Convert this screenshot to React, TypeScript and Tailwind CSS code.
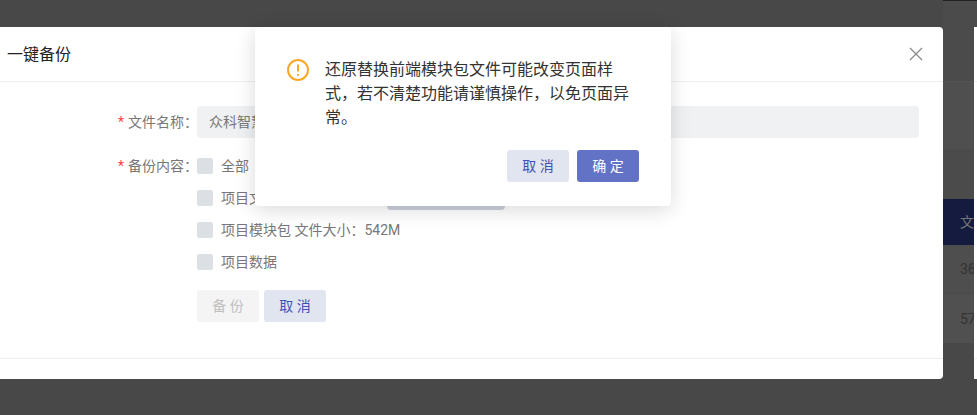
// App.tsx - backup dialog with confirm popup on top
const font = "font-['Roboto','Noto_Sans_CJK_SC',sans-serif]";

function Check({ label }: { label: string }) {
  return (
    <label className="flex h-8 items-center text-sm text-[#777]">
      <span className="mr-2 h-4 w-4 rounded-[2px] bg-[#dce0e5]" />
      {label}
    </label>
  );
}

export default function App() {
  return (
    <div className={`relative h-[415px] w-[977px] overflow-hidden bg-[#484848] ${font}`}>
      {/* page behind the mask */}
      <div className="ml-auto flex h-full w-[34px] flex-col border-t border-[#222] text-sm text-[#333]">
        <div className="h-[81px] border-b border-[#555] bg-[#4b4b4b]" />
        <div className="h-[67px] bg-[#4f4f4f]" />
        <div className="h-[50px] bg-[#4b4b4b]" />
        <div className="flex h-[46px] items-center bg-[#141b3f] pl-[17px] text-[#777]">文</div>
        <div className="flex h-[49px] items-center border-b border-[#4a4a4a] bg-[#4e4e4e] pl-[17px]">36</div>
        <div className="flex h-[49px] items-center bg-[#505050] pl-[17px]">57</div>
      </div>

      {/* edge of another white panel at the far right */}
      <div className="absolute right-0 top-[27px] flex h-[352px] w-[3px] flex-col bg-white">
        <div className="h-[55px] border-b border-[#eee]" />
        <div className="h-[277px] border-b border-[#eee]" />
      </div>

      {/* backup dialog */}
      <div className="absolute left-[-10px] top-[27px] flex h-[352px] w-[953px] flex-col rounded-[4px] bg-white">
        <div className="flex h-[55px] items-center justify-between border-b border-[#eee] pl-[17px] pr-[19px]">
          <span className="pt-px text-base text-[#222]">一键备份</span>
          <svg width="16" height="16" viewBox="0 0 16 16" fill="none" stroke="#8a8a8a" strokeWidth="1.3">
            <path d="M2 2l12 12M14 2L2 14" />
          </svg>
        </div>
        <div className="flex-1 border-b border-[#eee] pr-[24px] pt-6">
          <div className="flex items-center">
            <div className="w-[208px] text-right text-sm text-[#777]">
              <span className="mr-1 text-[#f44]">*</span>
              {"文件名称\uFF1A"}
            </div>
            <div className="-ml-px flex h-8 flex-1 items-center rounded-[4px] bg-[#f0f1f3] px-3 text-sm text-[#777]">
              众科智慧园区项目
            </div>
          </div>
          <div className="mt-[12px] flex">
            <div className="flex h-8 w-[208px] items-center justify-end text-sm text-[#777]">
              <span className="mr-1 text-[#f44]">*</span>
              {"备份内容\uFF1A"}
            </div>
            <div className="-ml-px">
              <Check label="全部" />
              <div className="relative">
                <Check label={"项目文件 文件大小\uFF1A36M"} />
                <div className="absolute left-[190px] top-0 h-7 w-[118px] rounded-[4px] bg-[#cdd1dc]" />
              </div>
              <Check label={"项目模块包 文件大小\uFF1A542M"} />
              <Check label="项目数据" />
              <div className="mt-[12px] flex gap-[5px]">
                <button className="h-8 w-[62px] rounded-[3px] bg-[#f4f4f5] text-sm text-[#c0c0c0]">备 份</button>
                <button className="h-8 w-[62px] rounded-[3px] bg-[#e1e5ef] text-sm text-[#3f51b5]">取 消</button>
              </div>
            </div>
          </div>
        </div>
        <div className="h-[20px]" />
      </div>

      {/* confirm popup */}
      <div className="absolute left-[255px] top-[27px] h-[179px] w-[416px] rounded-[4px] bg-white pl-8 pr-8 pt-[31px] shadow-[0_4px_20px_rgba(0,0,0,0.15)]">
        <div className="flex">
          <svg className="mr-4 mt-px shrink-0" width="22" height="22" viewBox="0 0 22 22" fill="none" stroke="#f9a825" strokeWidth="2">
            <circle cx="11" cy="11" r="10" />
            <path d="M11 5.5v7M11 15v1.8" />
          </svg>
          <p className="w-[312px] text-base leading-6 text-[#333]">
            {"还原替换前端模块包文件可能改变页面样式\uFF0C若不清楚功能请谨慎操作\uFF0C以免页面异常。"}
          </p>
        </div>
        <div className="mt-5 flex justify-end gap-2">
          <button className="h-8 w-[62px] rounded-[3px] bg-[#e1e5ef] text-sm text-[#3f51b5]">取 消</button>
          <button className="h-8 w-[62px] rounded-[3px] bg-[#6272c4] text-sm text-white">确 定</button>
        </div>
      </div>
    </div>
  );
}
